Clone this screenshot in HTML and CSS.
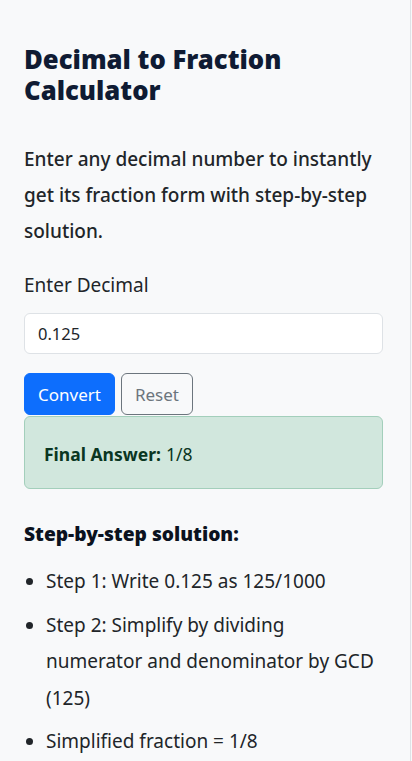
FILE: index.html
```html
<!DOCTYPE html>
<html lang="en">
<head>
<meta charset="utf-8">
<meta name="viewport" content="width=device-width, initial-scale=1">
<title>Decimal to Fraction Calculator</title>
<link rel="stylesheet" href="styles.css">
</head>
<body>
<main class="calc">
  <h1 class="calc-title">Decimal to Fraction Calculator</h1>
  <p class="calc-intro">Enter any decimal number to instantly get its fraction form with step-by-step solution.</p>
  <label class="field-label" for="dec">Enter Decimal</label>
  <input class="field-input" id="dec" type="text" value="0.125">
  <div class="btn-row">
    <button class="btn btn-primary" type="button">Convert</button>
    <button class="btn btn-outline" type="button">Reset</button>
  </div>
  <div class="alert-success"><strong>Final Answer:</strong> 1/8</div>
  <h2 class="steps-title">Step-by-step solution:</h2>
  <ul class="steps">
    <li>Step 1: Write 0.125 as 125/1000</li>
    <li>Step 2: Simplify by dividing numerator and denominator by GCD (125)</li>
    <li>Simplified fraction = 1/8</li>
  </ul>
</main>
</body>
</html>
```
FILE: styles.css
```css
* { box-sizing: border-box; }
html, body { margin: 0; padding: 0; }
body {
  background: #f8f9fa;
  font-family: "Noto Sans", "Open Sans", sans-serif;
  color: #212529;
}
.calc {
  width: 411px;
  min-height: 761px;
  border-right: 1px solid #dee2e6;
  padding: 44px 27px 20px 24px;
  display: flex;
  flex-direction: column;
  align-items: stretch;
}
.calc-title {
  margin: 0;
  font-size: 25.7px;
  line-height: 31px;
  font-weight: 900;
  color: #0f1b33;
}
.calc-intro {
  margin: 35px 0 0;
  font-size: 19px;
  line-height: 36px;
  font-weight: 500;
}
.field-label {
  margin-top: 23px;
  font-size: 19px;
  line-height: 27px;
}
.field-input {
  margin-top: 14px;
  height: 41px;
  border: 1px solid #dee2e6;
  border-radius: 6px;
  background: #fff;
  padding: 0 13px;
  font: inherit;
  font-size: 16.5px;
  color: #212529;
}
.btn-row {
  margin-top: 19px;
  display: flex;
  gap: 6px;
}
.btn {
  height: 42px;
  border-radius: 6px;
  font: inherit;
  font-size: 17px;
  padding: 0 13px;
}
.btn-primary {
  background: #0d6efd;
  border: 1px solid #0d6efd;
  color: #fff;
}
.btn-outline {
  background: transparent;
  border: 1px solid #6c757d;
  color: #6c757d;
}
.alert-success {
  margin-top: 1px;
  height: 73px;
  display: flex;
  align-items: center;
  gap: 5px;
  padding: 2px 19px 0;
  background: #d1e7dd;
  border: 1px solid #a3cfbb;
  border-radius: 6px;
  color: #0a3622;
  font-size: 17.5px;
}
.alert-success strong { font-weight: 700; }
.steps-title {
  margin: 31px 0 0;
  font-size: 19.2px;
  line-height: 28px;
  font-weight: 900;
  color: #0b1220;
}
.steps {
  margin: 15px 0 0;
  padding-left: 22px;
  font-size: 19px;
  line-height: 36.5px;
}
.steps li { margin-bottom: 7px; }
```
